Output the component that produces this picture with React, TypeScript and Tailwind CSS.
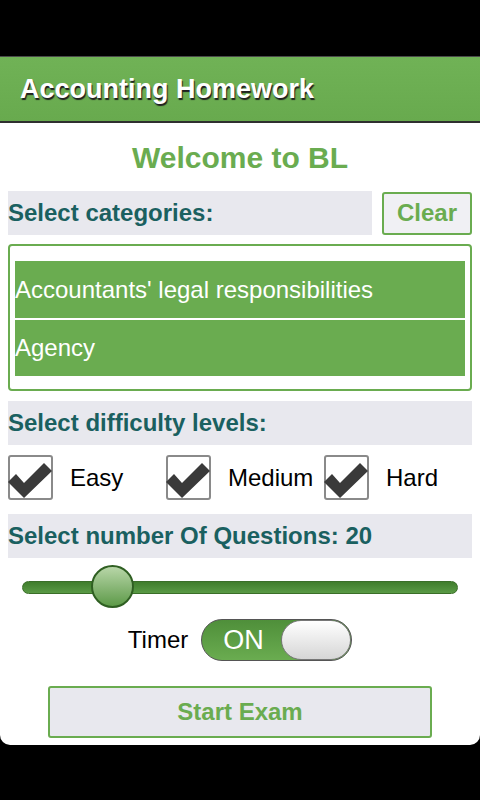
import React, { useState } from "react";

const font = { fontFamily: '"Liberation Sans", Arial, sans-serif' };

const Check: React.FC<{ checked: boolean; onClick: () => void }> = ({ checked, onClick }) => (
  <button
    onClick={onClick}
    className="w-[45px] h-[45px] shrink-0 rounded-[3px] border-2 border-[#8a8a8a] bg-white flex items-center justify-center overflow-visible"
  >
    {checked && (
      <svg width="46" height="38" viewBox="0 0 46 38" className="shrink-0 -ml-[2px] mt-[4px]">
        <path d="M1 21 L9 13 L17 22 L37 2 L45 10 L17 37 Z" fill="#3a3a3a" />
      </svg>
    )}
  </button>
);

const App: React.FC = () => {
  const [levels, setLevels] = useState({ Easy: true, Medium: true, Hard: true });
  const [timer, setTimer] = useState(true);

  const toggle = (k: keyof typeof levels) => setLevels({ ...levels, [k]: !levels[k] });

  return (
    <div className="w-[480px] h-[800px] bg-black flex flex-col" style={font}>
      <div className="h-[56px] shrink-0" />
      <div className="h-[67px] shrink-0 border-t border-[#4a4a4a] border-b-2 border-b-[#2f2f2f] bg-gradient-to-b from-[#70b256] to-[#68aa4e] flex items-center px-[20px]">
        <h1 className="text-white font-bold text-[27px] [text-shadow:1px_2px_1px_#1f1f1f]">Accounting Homework</h1>
      </div>
      <div className="h-[622px] shrink-0 bg-white rounded-b-[10px] flex flex-col px-[8px]">
        <h2 className="text-center text-[#6aac50] font-bold text-[30px] mt-[18px] leading-[34px]">Welcome to BL</h2>

        <div className="flex items-center gap-[10px] mt-[16px]">
          <div className="flex-1 h-[44px] bg-[#e8e8ee] flex items-center text-[#1a6060] font-bold text-[24px]">
            Select categories:
          </div>
          <button className="w-[90px] h-[43px] rounded-[3px] border-2 border-[#6aac50] bg-[#f0f0f4] text-[#6aac50] font-bold text-[24px]">
            Clear
          </button>
        </div>

        <div className="mt-[9px] h-[147px] rounded-[4px] border-2 border-[#6aac50] px-[5px] pt-[15px]">
          <div className="h-[57px] bg-[#6aac50] text-white text-[24px] flex items-center">Accountants' legal responsibilities</div>
          <div className="h-[2px]" />
          <div className="h-[56px] bg-[#6aac50] text-white text-[24px] flex items-center">Agency</div>
        </div>

        <div className="mt-[10px] h-[44px] bg-[#e8e8ee] flex items-center text-[#1a6060] font-bold text-[24px]">
          Select difficulty levels:
        </div>

        <div className="mt-[10px] flex items-center h-[45px]">
          <div className="flex items-center w-[158px]">
            <Check checked={levels.Easy} onClick={() => toggle("Easy")} />
            <span className="ml-[17px] text-[24px] text-black">Easy</span>
          </div>
          <div className="flex items-center w-[158px]">
            <Check checked={levels.Medium} onClick={() => toggle("Medium")} />
            <span className="ml-[17px] text-[24px] text-black">Medium</span>
          </div>
          <div className="flex items-center">
            <Check checked={levels.Hard} onClick={() => toggle("Hard")} />
            <span className="ml-[17px] text-[24px] text-black">Hard</span>
          </div>
        </div>

        <div className="mt-[14px] h-[44px] bg-[#e8e8ee] flex items-center text-[#1a6060] font-bold text-[24px]">
          Select number Of Questions: 20
        </div>

        <div className="mt-[7px] h-[43px] relative mx-[14px]">
          <div className="absolute left-0 right-0 top-[16px] h-[13px] rounded-full bg-gradient-to-b from-[#3f7d2c] to-[#5a9a45] border border-[#3a6e28]" />
          <div className="absolute left-[69px] top-0 w-[43px] h-[43px] rounded-full border-2 border-[#2f5f22] bg-gradient-to-b from-[#b8d6a8] to-[#5d9a48]" />
        </div>

        <div className="mt-[11px] flex items-center justify-center gap-[13px]">
          <span className="text-[24px] text-black">Timer</span>
          <button
            onClick={() => setTimer(!timer)}
            className="w-[151px] h-[42px] rounded-full border border-[#555] bg-gradient-to-b from-[#4f8f3a] to-[#6aac50] flex items-center relative overflow-hidden"
          >
            <span className="ml-[21px] text-white text-[27px]">{timer ? "ON" : "OFF"}</span>
            <span className="absolute right-0 top-0 w-[70px] h-[40px] rounded-full border border-[#777] bg-gradient-to-b from-[#ffffff] to-[#d6d6d6]" />
          </button>
        </div>

        <div className="mt-[25px] flex justify-center">
          <button className="w-[384px] h-[52px] rounded-[3px] border-2 border-[#6aac50] bg-[#e8e8ee] text-[#6aac50] font-bold text-[24px]">
            Start Exam
          </button>
        </div>
      </div>
    </div>
  );
};

export default App;
